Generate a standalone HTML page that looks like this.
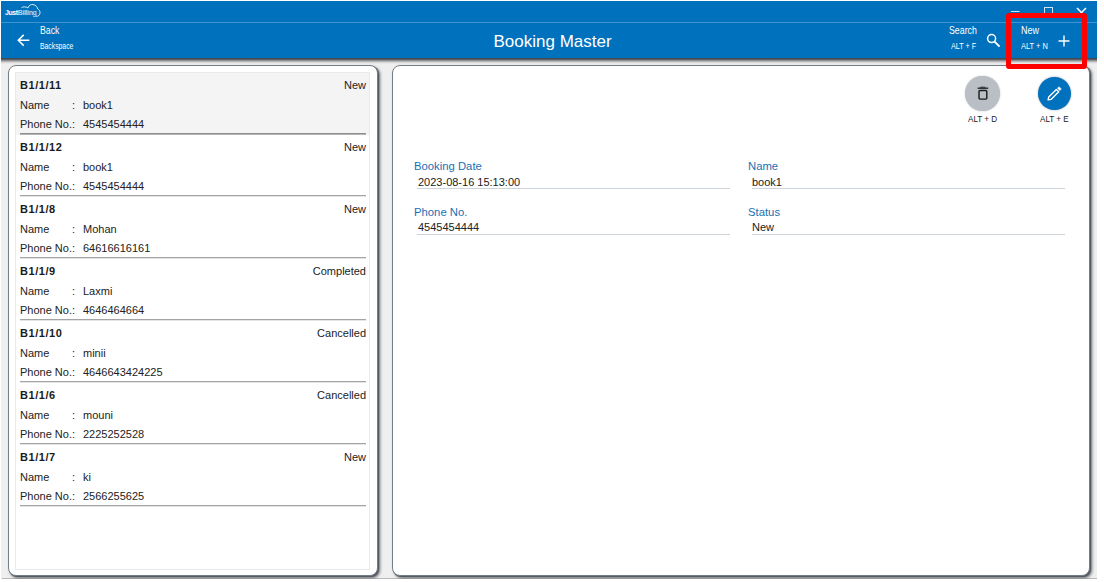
<!DOCTYPE html>
<html>
<head>
<meta charset="utf-8">
<title>Booking Master</title>
<style>
*{box-sizing:border-box;margin:0;padding:0}
html,body{width:1104px;height:582px;overflow:hidden;background:#fff}
body{font-family:"Liberation Sans",sans-serif;color:#222;position:relative}
#app{position:absolute;left:1px;top:1px;width:1096px;height:578px;background:#efefef;overflow:hidden}
#hdr{position:absolute;left:0;top:0;width:1096px;height:57px;background:#0071bc}
#hsh{position:absolute;left:0;top:57px;width:1096px;height:6px;background:linear-gradient(to bottom,#39434b 0,#4d545a 1.2px,#85888b 2.4px,#bcbdbe 3.6px,#dedede 4.8px,#efefef 6px)}
#hdr .sep{position:absolute;left:0;top:21px;width:100%;height:1px;background:#3f93cf}
.w{color:#fff;position:absolute;white-space:nowrap}
.panel{position:absolute;top:64px;height:511px;background:#fff;border:1px solid #747d86;border-radius:8px;box-shadow:1px 1px 0 0 #545a61,2px 2px 3px 0 rgba(40,46,52,.7)}
#lp{left:7px;width:370px}
#rp{left:391px;width:698px}
#list{position:absolute;left:6px;top:6px;width:355px;height:498px;border:1px solid #e9e9e9;background:#fff}
.it{position:absolute;left:0;width:353px;height:62px}
.it.sel{background:#f4f4f4}
.it.sel .ln{background:linear-gradient(#8e8e8e 50%,#b4b4b4 50%)}
.it .ln{position:absolute;left:4px;right:3px;top:60px;height:2px;background:linear-gradient(#a4a4a4 50%,#e4e4e4 50%)}
.it span{position:absolute;font-size:11px;line-height:14px;white-space:nowrap;color:#222}
.it .id{left:4px;top:5px;font-weight:bold;color:#1a1a1a;font-size:11px;letter-spacing:.55px}
.it .st{right:3px;top:5px}
.it .l1{left:4px;top:25px}
.it .c1{left:56px;top:25px}
.it .v1{left:67px;top:25px}
.it .l2{left:4px;top:44px}
.it .v2{left:67px;top:44px}
.fl{position:absolute;font-size:11.3px;line-height:14px;color:#1a6fb5;white-space:nowrap}
.fv{position:absolute;font-size:11px;line-height:14px;color:#222;white-space:nowrap}
.ul{position:absolute;height:1px;background:#ccd4d9}
.circ{position:absolute;width:35px;height:35px;border-radius:50%}
.kl{position:absolute;font-size:9px;line-height:10px;color:#222;white-space:nowrap;transform:scaleX(.9);transform-origin:0 0}
#red{position:absolute;left:1006px;top:13px;width:81px;height:56px;border:5px solid #fe0000;border-radius:3px}
</style>
</head>
<body>
<div id="app">
  <div id="hdr">
    <div class="sep"></div>
    <div class="w" id="logo" style="left:4px;top:8px;font-size:7px;line-height:8px;font-weight:bold;letter-spacing:-0.4px">Just<span style="color:rgba(255,255,255,.72)">Billing</span></div>
    <svg style="position:absolute;left:0;top:0" width="45" height="21" viewBox="0 0 45 21"><path d="M20.5 6.6 C22 5.6 25 5.6 27 6.9 C27.5 4.3 30 3.2 32 3.5 C35 4 36.5 6.3 36.7 8 C39.3 9 39.8 12.6 37.8 14.5 C37.2 15.1 36.2 15.4 35.3 15.4" fill="none" stroke="rgba(255,255,255,.82)" stroke-width="1"/></svg>
    <svg style="position:absolute;left:16px;top:33px" width="14" height="13" viewBox="0 0 14 13"><path d="M12.3 6.25 H1.6 M6.7 0.9 L1.3 6.25 L6.7 11.6" fill="none" stroke="#fff" stroke-width="1.5"/></svg>
    <div class="w" style="left:38.5px;top:24.4px;font-size:10px;line-height:12px;transform:scaleX(.87);transform-origin:0 0">Back</div>
    <div class="w" style="left:38.5px;top:40px;font-size:8.8px;line-height:10px;transform:scaleX(.775);transform-origin:0 0">Backspace</div>
    <div class="w" id="title" style="left:492.5px;top:31px;font-size:17px;line-height:20px">Booking Master</div>
    <div class="w" style="left:948px;top:24.4px;font-size:10px;line-height:12px;transform:scaleX(.88);transform-origin:0 0">Search</div>
    <div class="w" style="left:949.5px;top:40px;font-size:8.8px;line-height:10px;transform:scaleX(.82);transform-origin:0 0">ALT + F</div>
    <svg style="position:absolute;left:985px;top:32px" width="15" height="15" viewBox="0 0 15 15"><circle cx="5.6" cy="5.6" r="4" fill="none" stroke="#fff" stroke-width="1.5"/><path d="M8.6 8.6 L13.6 13.6" stroke="#fff" stroke-width="1.8"/></svg>
    <div class="w" style="left:1019.5px;top:24.4px;font-size:10px;line-height:12px;transform:scaleX(.9);transform-origin:0 0">New</div>
    <div class="w" style="left:1019.5px;top:40px;font-size:8.8px;line-height:10px;transform:scaleX(.845);transform-origin:0 0">ALT + N</div>
    <svg style="position:absolute;left:1057px;top:34px" width="12" height="12" viewBox="0 0 12 12"><path d="M6 0.5 V11.5 M0.5 6 H11.5" stroke="#fff" stroke-width="1.4"/></svg>
    <!-- window controls -->
    <svg style="position:absolute;left:1005px;top:2px" width="90" height="16" viewBox="0 0 90 16"><path d="M5 8.5 H13.5" stroke="#cfe3f3" stroke-width="1"/><rect x="38.5" y="4.5" width="8" height="8" fill="none" stroke="#cfe3f3" stroke-width="1"/><path d="M71 5 L80 14 M80 5 L71 14" stroke="#fff" stroke-width="1.5"/></svg>
  </div>

  <div id="hsh"></div>
  <div style="position:absolute;left:1px;top:577px;width:1095px;height:1px;background:#b9b9b9"></div>
  <div class="panel" id="lp">
    <div id="list">
      <div class="it sel" style="top:0"><span class="id">B1/1/11</span><span class="st">New</span><span class="l1">Name</span><span class="c1">:</span><span class="v1">book1</span><span class="l2">Phone No.:</span><span class="v2">4545454444</span><div class="ln"></div></div>
      <div class="it" style="top:62px"><span class="id">B1/1/12</span><span class="st">New</span><span class="l1">Name</span><span class="c1">:</span><span class="v1">book1</span><span class="l2">Phone No.:</span><span class="v2">4545454444</span><div class="ln"></div></div>
      <div class="it" style="top:124px"><span class="id">B1/1/8</span><span class="st">New</span><span class="l1">Name</span><span class="c1">:</span><span class="v1">Mohan</span><span class="l2">Phone No.:</span><span class="v2">64616616161</span><div class="ln"></div></div>
      <div class="it" style="top:186px"><span class="id">B1/1/9</span><span class="st">Completed</span><span class="l1">Name</span><span class="c1">:</span><span class="v1">Laxmi</span><span class="l2">Phone No.:</span><span class="v2">4646464664</span><div class="ln"></div></div>
      <div class="it" style="top:248px"><span class="id">B1/1/10</span><span class="st">Cancelled</span><span class="l1">Name</span><span class="c1">:</span><span class="v1">minii</span><span class="l2">Phone No.:</span><span class="v2">4646643424225</span><div class="ln"></div></div>
      <div class="it" style="top:310px"><span class="id">B1/1/6</span><span class="st">Cancelled</span><span class="l1">Name</span><span class="c1">:</span><span class="v1">mouni</span><span class="l2">Phone No.:</span><span class="v2">2225252528</span><div class="ln"></div></div>
      <div class="it" style="top:372px"><span class="id">B1/1/7</span><span class="st">New</span><span class="l1">Name</span><span class="c1">:</span><span class="v1">ki</span><span class="l2">Phone No.:</span><span class="v2">2566255625</span><div class="ln"></div></div>
    </div>
  </div>

  <div class="panel" id="rp">
    <div class="circ" style="left:572.4px;top:10px;width:34.6px;height:34.6px;background:#b9bfc5;box-shadow:0 0 1.5px rgba(120,128,136,.6)"></div>
    <svg style="position:absolute;left:584px;top:20px" width="13" height="15" viewBox="0 0 13 15"><path d="M3.2 1.2 H8.4" stroke="#222" stroke-width="0.9" fill="none"/><path d="M0.6 2.2 H11.2" stroke="#1a1a1a" stroke-width="1.3" fill="none"/><rect x="2" y="4.5" width="7.8" height="8.6" rx="1" fill="none" stroke="#1a1a1a" stroke-width="1.4"/></svg>
    <div class="kl" style="left:575px;top:48px">ALT + D</div>
    <div class="circ" style="left:644.8px;top:10.7px;width:33.5px;height:33.5px;background:#0071bc;box-shadow:0 0 2px rgba(0,40,80,.45)"></div>
    <svg style="position:absolute;left:654px;top:20px" width="16" height="16" viewBox="0 0 16 16"><path d="M1.1 13.9 L1.7 11.1 L9.4 3.4 L11.7 5.7 L4 13.4 Z" fill="none" stroke="#fff" stroke-width="1.4" stroke-linejoin="round"/><path d="M10.5 2.2 L12 0.7 L14.3 3 L12.8 4.5 Z" fill="#fff" stroke="#fff" stroke-width="0.5" stroke-linejoin="round"/></svg>
    <div class="kl" style="left:647px;top:48px">ALT + E</div>

    <div class="fl" style="left:21px;top:93px">Booking Date</div>
    <div class="fv" style="left:25px;top:109px">2023-08-16 15:13:00</div>
    <div class="ul" style="left:24px;top:122px;width:313px"></div>
    <div class="fl" style="left:21px;top:139px">Phone No.</div>
    <div class="fv" style="left:25px;top:154px">4545454444</div>
    <div class="ul" style="left:24px;top:168px;width:313px"></div>

    <div class="fl" style="left:355px;top:93px">Name</div>
    <div class="fv" style="left:359px;top:109px">book1</div>
    <div class="ul" style="left:359px;top:122px;width:313px"></div>
    <div class="fl" style="left:355px;top:139px">Status</div>
    <div class="fv" style="left:359px;top:154px">New</div>
    <div class="ul" style="left:359px;top:168px;width:313px"></div>
  </div>
</div>
<div id="red"></div>
</body>
</html>
